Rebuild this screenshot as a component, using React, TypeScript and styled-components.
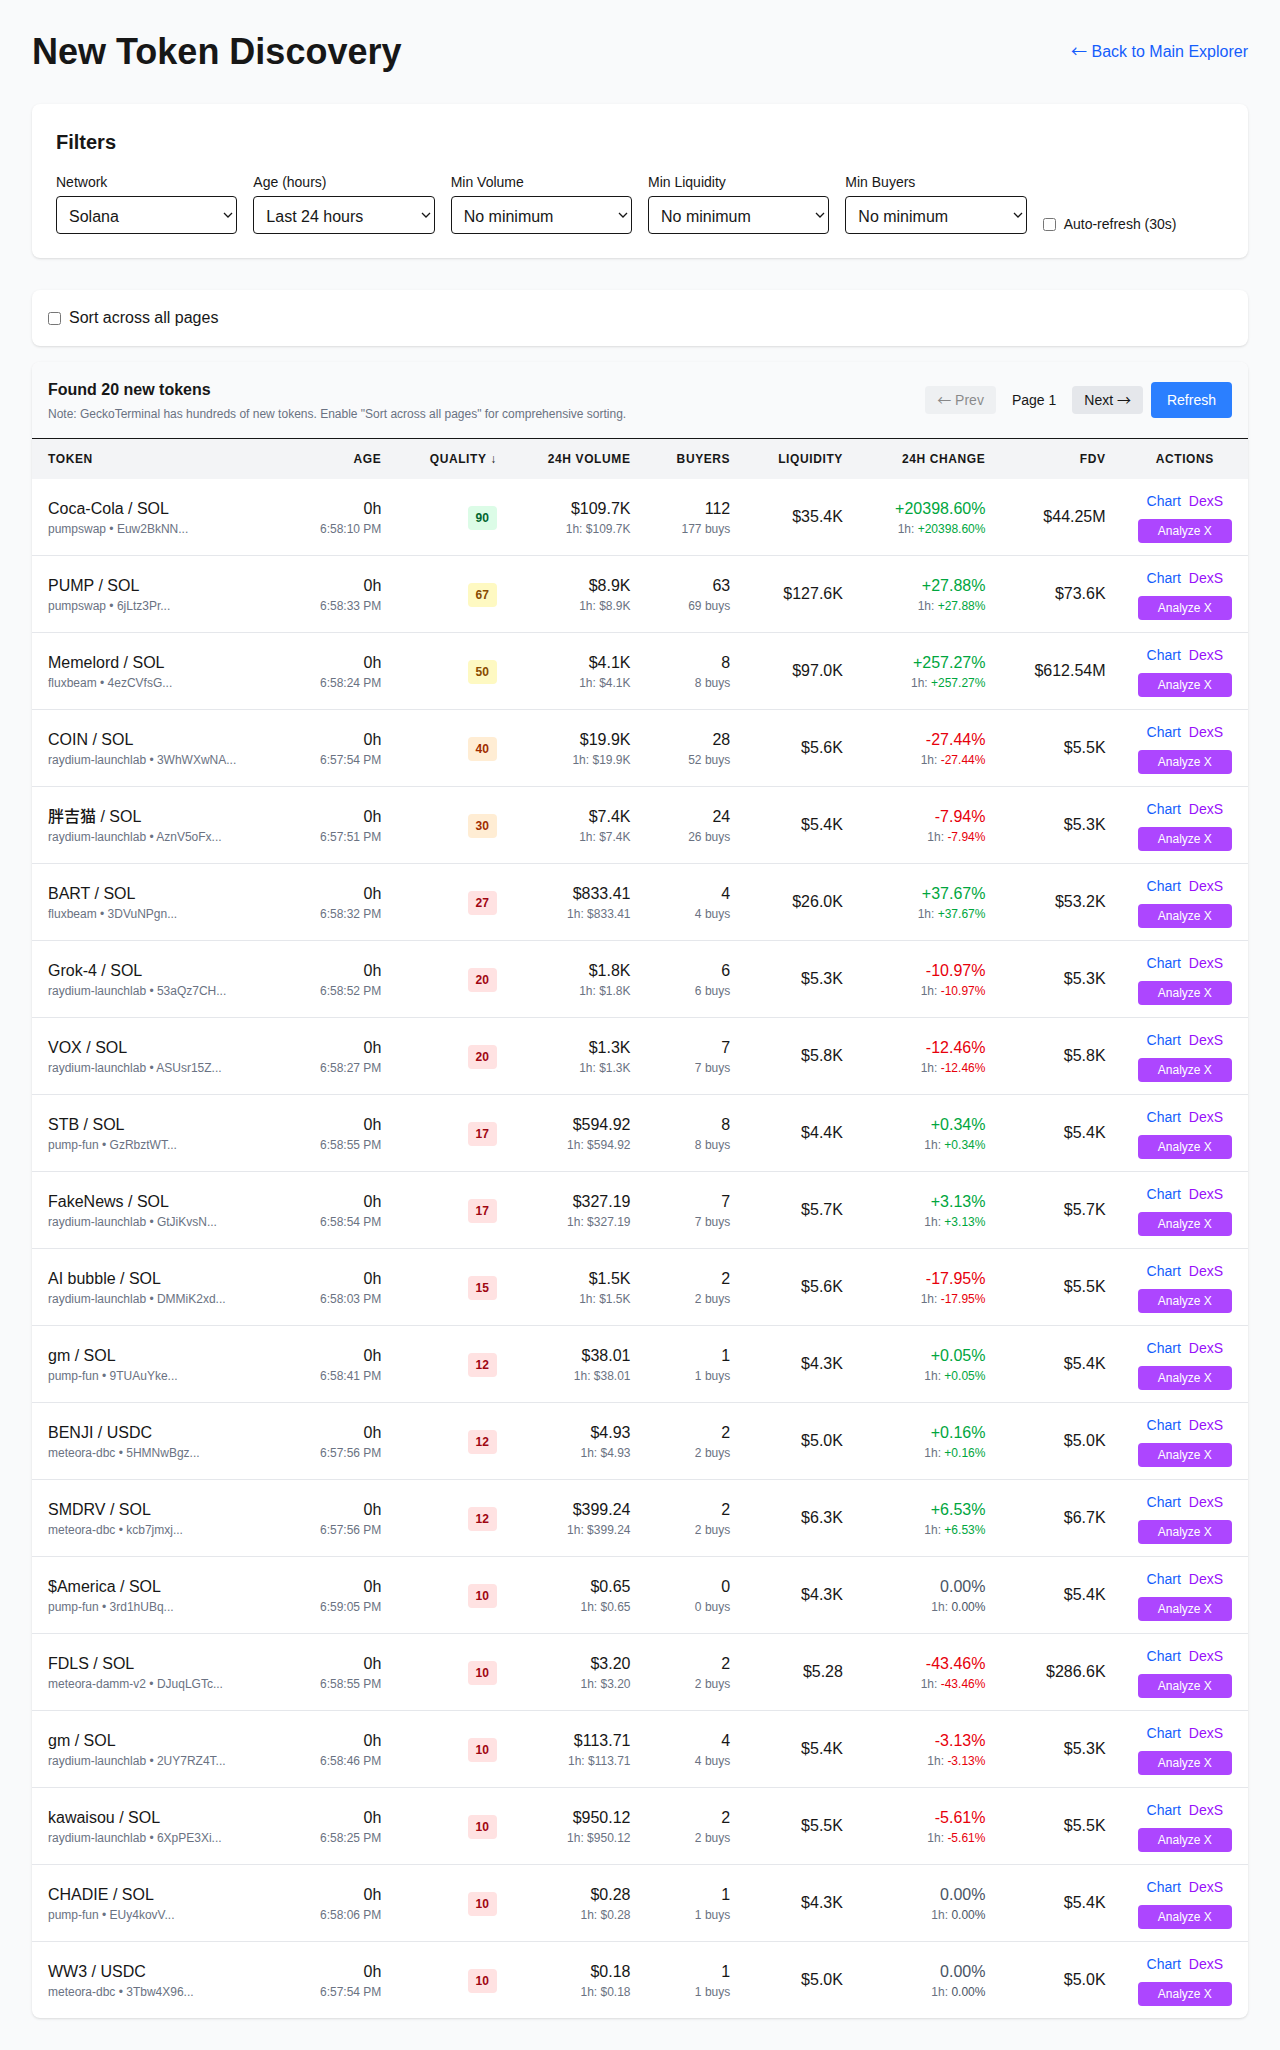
import React, { useState } from "react";
import styled, { createGlobalStyle } from "styled-components";

const color = {
  page: "#f9fafb",
  ink: "#171717",
  muted: "#6a7282",
  neutral: "#4a5565",
  up: "#00a63e",
  down: "#e7000b",
  line: "#e5e7eb",
  head: "#f3f4f6",
  link: "#155dfc",
  violet: "#9810fa",
};

const GlobalStyle = createGlobalStyle`
  *, *::before, *::after { box-sizing: border-box; }
  body {
    margin: 0;
    background: ${color.page};
    color: ${color.ink};
    font-family: "Liberation Sans", Arial, "Noto Sans CJK SC", sans-serif;
    font-size: 16px;
    line-height: 24px;
  }
  h1, h2, h3, p { margin: 0; }
  button, select, input { font: inherit; color: inherit; }
  button { border: 0; cursor: pointer; }
  a { text-decoration: none; }
`;

const Page = styled.main`
  padding: 32px;
`;

const PageHeader = styled.header`
  display: flex;
  justify-content: space-between;
  align-items: center;
  margin-bottom: 32px;
`;

const Title = styled.h1`
  font-size: 36px;
  line-height: 40px;
  font-weight: 700;
`;

const TextLink = styled.a<{ $tone?: string }>`
  color: ${(p) => p.$tone ?? color.link};
`;

const Arrow = styled.span`
  font-family: "Noto Sans CJK SC", sans-serif;
  line-height: 1;
`;

const Card = styled.section`
  background: #fff;
  border-radius: 8px;
  box-shadow: 0 1px 3px 0 rgb(0 0 0 / 0.1), 0 1px 2px -1px rgb(0 0 0 / 0.1);
`;

const FilterCard = styled(Card)`
  padding: 24px;
  margin-bottom: 32px;
`;

const FilterTitle = styled.h2`
  font-size: 20px;
  line-height: 28px;
  font-weight: 600;
  margin-bottom: 16px;
`;

const FilterGrid = styled.div`
  display: grid;
  grid-template-columns: repeat(6, minmax(0, 1fr));
  gap: 16px;
`;

const Field = styled.div`
  display: flex;
  flex-direction: column;
  gap: 4px;
`;

const FieldLabel = styled.label`
  font-size: 14px;
  line-height: 20px;
  font-weight: 500;
`;

const SelectBox = styled.div`
  display: grid;
  align-items: center;
  & > * {
    grid-area: 1 / 1;
  }
`;

const Select = styled.select`
  appearance: none;
  width: 100%;
  height: 38px;
  padding: 8px 20px 8px 12px;
  border: 1px solid ${color.ink};
  border-radius: 4px;
  background: transparent;
`;

const Chevron = styled.svg`
  justify-self: end;
  width: 10px;
  height: 6px;
  margin-right: 4px;
  pointer-events: none;
`;

const CheckLabel = styled.label<{ $small?: boolean }>`
  display: flex;
  align-items: center;
  align-self: end;
  gap: 8px;
  font-size: ${(p) => (p.$small ? "14px" : "16px")};
  line-height: ${(p) => (p.$small ? "20px" : "24px")};
`;

const Checkbox = styled.input`
  margin: 0;
`;

const SortCard = styled(Card)`
  padding: 16px;
  margin-bottom: 16px;
`;

const TableCard = styled(Card)`
  overflow: hidden;
`;

const TableBar = styled.div`
  display: flex;
  justify-content: space-between;
  align-items: center;
  padding: 16px;
  background: ${color.page};
  border-bottom: 1px solid ${color.ink};
`;

const Count = styled.h3`
  font-size: 16px;
  line-height: 24px;
  font-weight: 600;
`;

const Note = styled.p`
  margin-top: 4px;
  font-size: 12px;
  line-height: 16px;
  color: ${color.muted};
`;

const Pager = styled.div`
  display: flex;
  align-items: center;
  gap: 8px;
  font-size: 14px;
  line-height: 20px;
`;

const PagerButton = styled.button`
  padding: 4px 12px;
  border-radius: 4px;
  background: ${color.line};
  &:disabled {
    opacity: 0.5;
    cursor: not-allowed;
  }
`;

const PageNumber = styled.span`
  padding: 0 8px;
`;

const RefreshButton = styled.button`
  padding: 8px 16px;
  border-radius: 4px;
  background: #2b7fff;
  color: #fff;
`;

const Table = styled.table`
  width: 100%;
  border-collapse: separate;
  border-spacing: 0;
`;

type Align = "left" | "right" | "center";

const HeadCell = styled.th<{ $align: Align }>`
  padding: 12px 16px;
  background: ${color.head};
  font-size: 12px;
  line-height: 16px;
  font-weight: 700;
  letter-spacing: 0.05em;
  text-transform: uppercase;
  text-align: ${(p) => p.$align};
  white-space: nowrap;
`;

const Cell = styled.td<{ $align?: Align }>`
  padding: 12px 16px;
  text-align: ${(p) => p.$align ?? "right"};
  vertical-align: middle;
  white-space: nowrap;
`;

const Row = styled.tr`
  &:not(:last-child) > ${Cell} {
    border-bottom: 1px solid ${color.line};
  }
`;

const Main = styled.div<{ $tone?: string }>`
  font-weight: 500;
  color: ${(p) => p.$tone ?? "inherit"};
`;

const Sub = styled.div`
  font-size: 12px;
  line-height: 16px;
  color: ${color.muted};
`;

const Tone = styled.span<{ $tone: string }>`
  color: ${(p) => p.$tone};
`;

const Badge = styled.span<{ $bg: string; $fg: string }>`
  display: inline-block;
  padding: 4px 8px;
  border-radius: 4px;
  font-size: 12px;
  line-height: 16px;
  font-weight: 700;
  background: ${(p) => p.$bg};
  color: ${(p) => p.$fg};
`;

const Actions = styled.div`
  display: flex;
  flex-direction: column;
  gap: 8px;
`;

const ActionLinks = styled.div`
  display: flex;
  justify-content: center;
  gap: 8px;
  font-size: 14px;
  line-height: 20px;
`;

const AnalyzeButton = styled.button`
  padding: 4px 8px;
  border-radius: 4px;
  background: #ad46ff;
  color: #fff;
  font-size: 12px;
  line-height: 16px;
`;

const filters: { id: string; label: string; options: string[] }[] = [
  { id: "network", label: "Network", options: ["Solana", "Ethereum", "Base"] },
  { id: "age", label: "Age (hours)", options: ["Last 24 hours", "Last 6 hours", "Last hour"] },
  { id: "volume", label: "Min Volume", options: ["No minimum", "$1K", "$10K"] },
  { id: "liquidity", label: "Min Liquidity", options: ["No minimum", "$1K", "$10K"] },
  { id: "buyers", label: "Min Buyers", options: ["No minimum", "10", "50"] },
];

const columns: [string, Align][] = [
  ["Token", "left"],
  ["Age", "right"],
  ["Quality ↓", "right"],
  ["24h Volume", "right"],
  ["Buyers", "right"],
  ["Liquidity", "right"],
  ["24h Change", "right"],
  ["FDV", "right"],
  ["Actions", "center"],
];

// name, source, time, quality, volume, buyers, buys, liquidity, change, fdv
type Token = [string, string, string, number, string, number, number, string, string, string];

const tokens: Token[] = [
  ["Coca-Cola / SOL", "pumpswap • Euw2BkNN...", "6:58:10 PM", 90, "$109.7K", 112, 177, "$35.4K", "+20398.60%", "$44.25M"],
  ["PUMP / SOL", "pumpswap • 6jLtz3Pr...", "6:58:33 PM", 67, "$8.9K", 63, 69, "$127.6K", "+27.88%", "$73.6K"],
  ["Memelord / SOL", "fluxbeam • 4ezCVfsG...", "6:58:24 PM", 50, "$4.1K", 8, 8, "$97.0K", "+257.27%", "$612.54M"],
  ["COIN / SOL", "raydium-launchlab • 3WhWXwNA...", "6:57:54 PM", 40, "$19.9K", 28, 52, "$5.6K", "-27.44%", "$5.5K"],
  ["胖吉猫 / SOL", "raydium-launchlab • AznV5oFx...", "6:57:51 PM", 30, "$7.4K", 24, 26, "$5.4K", "-7.94%", "$5.3K"],
  ["BART / SOL", "fluxbeam • 3DVuNPgn...", "6:58:32 PM", 27, "$833.41", 4, 4, "$26.0K", "+37.67%", "$53.2K"],
  ["Grok-4 / SOL", "raydium-launchlab • 53aQz7CH...", "6:58:52 PM", 20, "$1.8K", 6, 6, "$5.3K", "-10.97%", "$5.3K"],
  ["VOX / SOL", "raydium-launchlab • ASUsr15Z...", "6:58:27 PM", 20, "$1.3K", 7, 7, "$5.8K", "-12.46%", "$5.8K"],
  ["STB / SOL", "pump-fun • GzRbztWT...", "6:58:55 PM", 17, "$594.92", 8, 8, "$4.4K", "+0.34%", "$5.4K"],
  ["FakeNews / SOL", "raydium-launchlab • GtJiKvsN...", "6:58:54 PM", 17, "$327.19", 7, 7, "$5.7K", "+3.13%", "$5.7K"],
  ["AI bubble / SOL", "raydium-launchlab • DMMiK2xd...", "6:58:03 PM", 15, "$1.5K", 2, 2, "$5.6K", "-17.95%", "$5.5K"],
  ["gm / SOL", "pump-fun • 9TUAuYke...", "6:58:41 PM", 12, "$38.01", 1, 1, "$4.3K", "+0.05%", "$5.4K"],
  ["BENJI / USDC", "meteora-dbc • 5HMNwBgz...", "6:57:56 PM", 12, "$4.93", 2, 2, "$5.0K", "+0.16%", "$5.0K"],
  ["SMDRV / SOL", "meteora-dbc • kcb7jmxj...", "6:57:56 PM", 12, "$399.24", 2, 2, "$6.3K", "+6.53%", "$6.7K"],
  ["$America / SOL", "pump-fun • 3rd1hUBq...", "6:59:05 PM", 10, "$0.65", 0, 0, "$4.3K", "0.00%", "$5.4K"],
  ["FDLS / SOL", "meteora-damm-v2 • DJuqLGTc...", "6:58:55 PM", 10, "$3.20", 2, 2, "$5.28", "-43.46%", "$286.6K"],
  ["gm / SOL", "raydium-launchlab • 2UY7RZ4T...", "6:58:46 PM", 10, "$113.71", 4, 4, "$5.4K", "-3.13%", "$5.3K"],
  ["kawaisou / SOL", "raydium-launchlab • 6XpPE3Xi...", "6:58:25 PM", 10, "$950.12", 2, 2, "$5.5K", "-5.61%", "$5.5K"],
  ["CHADIE / SOL", "pump-fun • EUy4kovV...", "6:58:06 PM", 10, "$0.28", 1, 1, "$4.3K", "0.00%", "$5.4K"],
  ["WW3 / USDC", "meteora-dbc • 3Tbw4X96...", "6:57:54 PM", 10, "$0.18", 1, 1, "$5.0K", "0.00%", "$5.0K"],
];

function changeTone(change: string) {
  if (change.startsWith("+")) return color.up;
  if (change.startsWith("-")) return color.down;
  return color.neutral;
}

function badgeColors(quality: number): [string, string] {
  if (quality >= 70) return ["#dcfce7", "#016630"];
  if (quality >= 50) return ["#fef9c2", "#894b00"];
  if (quality >= 30) return ["#ffedd4", "#9f2d00"];
  return ["#ffe2e2", "#9f0712"];
}

function TokenRow({ token }: { token: Token }) {
  const [name, source, time, quality, volume, buyers, buys, liquidity, change, fdv] = token;
  const tone = changeTone(change);
  const [bg, fg] = badgeColors(quality);
  return (
    <Row>
      <Cell $align="left">
        <Main>{name}</Main>
        <Sub>{source}</Sub>
      </Cell>
      <Cell>
        <Main>0h</Main>
        <Sub>{time}</Sub>
      </Cell>
      <Cell>
        <Badge $bg={bg} $fg={fg}>{quality}</Badge>
      </Cell>
      <Cell>
        <Main>{volume}</Main>
        <Sub>1h: {volume}</Sub>
      </Cell>
      <Cell>
        <Main>{buyers}</Main>
        <Sub>{buys} buys</Sub>
      </Cell>
      <Cell>{liquidity}</Cell>
      <Cell>
        <Main $tone={tone}>{change}</Main>
        <Sub>
          1h: <Tone $tone={tone}>{change}</Tone>
        </Sub>
      </Cell>
      <Cell>{fdv}</Cell>
      <Cell $align="center">
        <Actions>
          <ActionLinks>
            <TextLink href="#chart">Chart</TextLink>
            <TextLink href="#dexs" $tone={color.violet}>DexS</TextLink>
          </ActionLinks>
          <AnalyzeButton type="button">Analyze X</AnalyzeButton>
        </Actions>
      </Cell>
    </Row>
  );
}

export default function App() {
  const [autoRefresh, setAutoRefresh] = useState(false);
  const [sortAll, setSortAll] = useState(false);
  return (
    <>
      <GlobalStyle />
      <Page>
        <PageHeader>
          <Title>New Token Discovery</Title>
          <TextLink href="#explorer"><Arrow>←</Arrow> Back to Main Explorer</TextLink>
        </PageHeader>

        <FilterCard>
          <FilterTitle>Filters</FilterTitle>
          <FilterGrid>
            {filters.map((f) => (
              <Field key={f.id}>
                <FieldLabel htmlFor={f.id}>{f.label}</FieldLabel>
                <SelectBox>
                  <Select id={f.id} defaultValue={f.options[0]}>
                    {f.options.map((o) => (
                      <option key={o}>{o}</option>
                    ))}
                  </Select>
                  <Chevron viewBox="0 0 10 6" aria-hidden="true">
                    <path d="M1 1l4 4 4-4" fill="none" stroke={color.ink} strokeWidth="1.3" />
                  </Chevron>
                </SelectBox>
              </Field>
            ))}
            <CheckLabel $small>
              <Checkbox type="checkbox" checked={autoRefresh} onChange={(e) => setAutoRefresh(e.target.checked)} />
              Auto-refresh (30s)
            </CheckLabel>
          </FilterGrid>
        </FilterCard>

        <SortCard>
          <CheckLabel>
            <Checkbox type="checkbox" checked={sortAll} onChange={(e) => setSortAll(e.target.checked)} />
            Sort across all pages
          </CheckLabel>
        </SortCard>

        <TableCard>
          <TableBar>
            <div>
              <Count>Found 20 new tokens</Count>
              <Note>
                Note: GeckoTerminal has hundreds of new tokens. Enable "Sort across all pages" for comprehensive sorting.
              </Note>
            </div>
            <Pager>
              <PagerButton type="button" disabled><Arrow>←</Arrow> Prev</PagerButton>
              <PageNumber>Page 1</PageNumber>
              <PagerButton type="button">Next <Arrow>→</Arrow></PagerButton>
              <RefreshButton type="button">Refresh</RefreshButton>
            </Pager>
          </TableBar>
          <Table>
            <thead>
              <tr>
                {columns.map(([label, align]) => (
                  <HeadCell key={label} $align={align}>{label}</HeadCell>
                ))}
              </tr>
            </thead>
            <tbody>
              {tokens.map((t) => (
                <TokenRow key={t[1]} token={t} />
              ))}
            </tbody>
          </Table>
        </TableCard>
      </Page>
    </>
  );
}
